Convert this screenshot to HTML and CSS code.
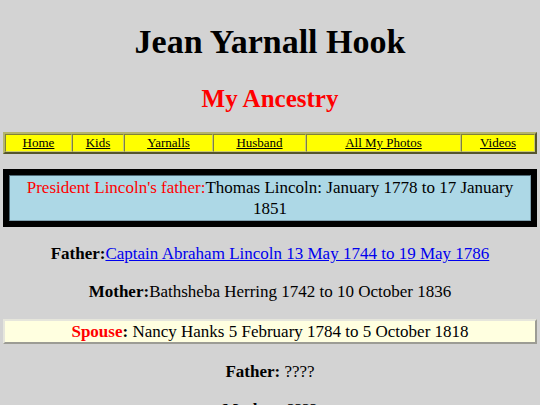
FILE: index.html
```html
<!DOCTYPE html>
<html>
<head>
<meta charset="utf-8">
<title>Jean Yarnall Hook - My Ancestry</title>
<link rel="stylesheet" href="styles.css">
</head>
<body>
<h1 class="title">Jean Yarnall Hook</h1>
<h2 class="subtitle">My Ancestry</h2>
<table class="nav">
  <colgroup>
    <col class="c1"><col class="c2"><col class="c3"><col class="c4"><col class="c5"><col class="c6">
  </colgroup>
  <tr>
    <td><a href="#">Home</a></td>
    <td><a href="#">Kids</a></td>
    <td><a href="#">Yarnalls</a></td>
    <td><a href="#">Husband</a></td>
    <td><a href="#">All My Photos</a></td>
    <td><a href="#">Videos</a></td>
  </tr>
</table>
<div class="frame">
  <div class="frame-inner"><span class="red">President Lincoln's father:</span>Thomas Lincoln: January 1778 to 17 January 1851</div>
</div>
<p class="line first"><b>Father:</b><a class="blue" href="#">Captain Abraham Lincoln 13 May 1744 to 19 May 1786</a></p>
<p class="line second"><b>Mother:</b>Bathsheba Herring 1742 to 10 October 1836</p>
<div class="spouse"><b><span class="red">Spouse</span>:</b> Nancy Hanks 5 February 1784 to 5 October 1818</div>
<p class="line after"><b>Father:</b> ????</p>
<p class="line"><b>Mother:</b> ????</p>
</body>
</html>
```
FILE: styles.css
```css
html, body {
  background: #d3d3d3;
}
body {
  margin: 0 3px;
  font-family: "Liberation Serif", "Times New Roman", serif;
  color: #000;
  text-align: center;
}
.title {
  font-size: 34px;
  font-weight: bold;
  margin: 23px 0 0;
}
.subtitle {
  font-size: 25px;
  font-weight: bold;
  color: #ff0000;
  margin: 24px 0 0;
}
.nav {
  width: 534px;
  margin: 19px 0 0;
  table-layout: fixed;
  border-collapse: separate;
  border-spacing: 0;
  background: #ffff00;
  border: 2px solid;
  border-color: #b4b46a #55552c #55552c #b4b46a;
  font-size: 13px;
}
.nav td {
  padding: 0;
  line-height: 16px;
  text-align: center;
  border: 1px solid;
  border-color: #80803c #c8c870 #c8c870 #80803c;
}
.nav a {
  color: #000;
}
.c1 { width: 67px; }
.c2 { width: 52px; }
.c3 { width: 89px; }
.c4 { width: 93px; }
.c5 { width: 155px; }
.c6 { width: auto; }
.frame {
  margin-top: 15px;
  border: 6px solid #000;
  background: #000;
  font-size: 17px;
}
.frame-inner {
  background: #add8e6;
  border: 1px solid;
  border-color: #4f6a76 #7fa0ae #7fa0ae #4f6a76;
  padding: 1px 4px;
  line-height: 21px;
}
.red {
  color: #ff0000;
}
.line {
  font-size: 17px;
  line-height: 20px;
  margin: 18px 0;
}
.line.first {
  margin-top: 17px;
  margin-bottom: 13px;
}
.line.second {
  margin-bottom: 17px;
}
.line.after {
  margin-top: 18px;
}
.blue {
  color: #0000ee;
}
.spouse {
  margin-top: 17px;
  background: #ffffe0;
  border: 2px solid;
  border-color: #e6e6dc #9c9c94 #9c9c94 #e6e6dc;
  font-size: 17px;
  line-height: 21px;
}
```
